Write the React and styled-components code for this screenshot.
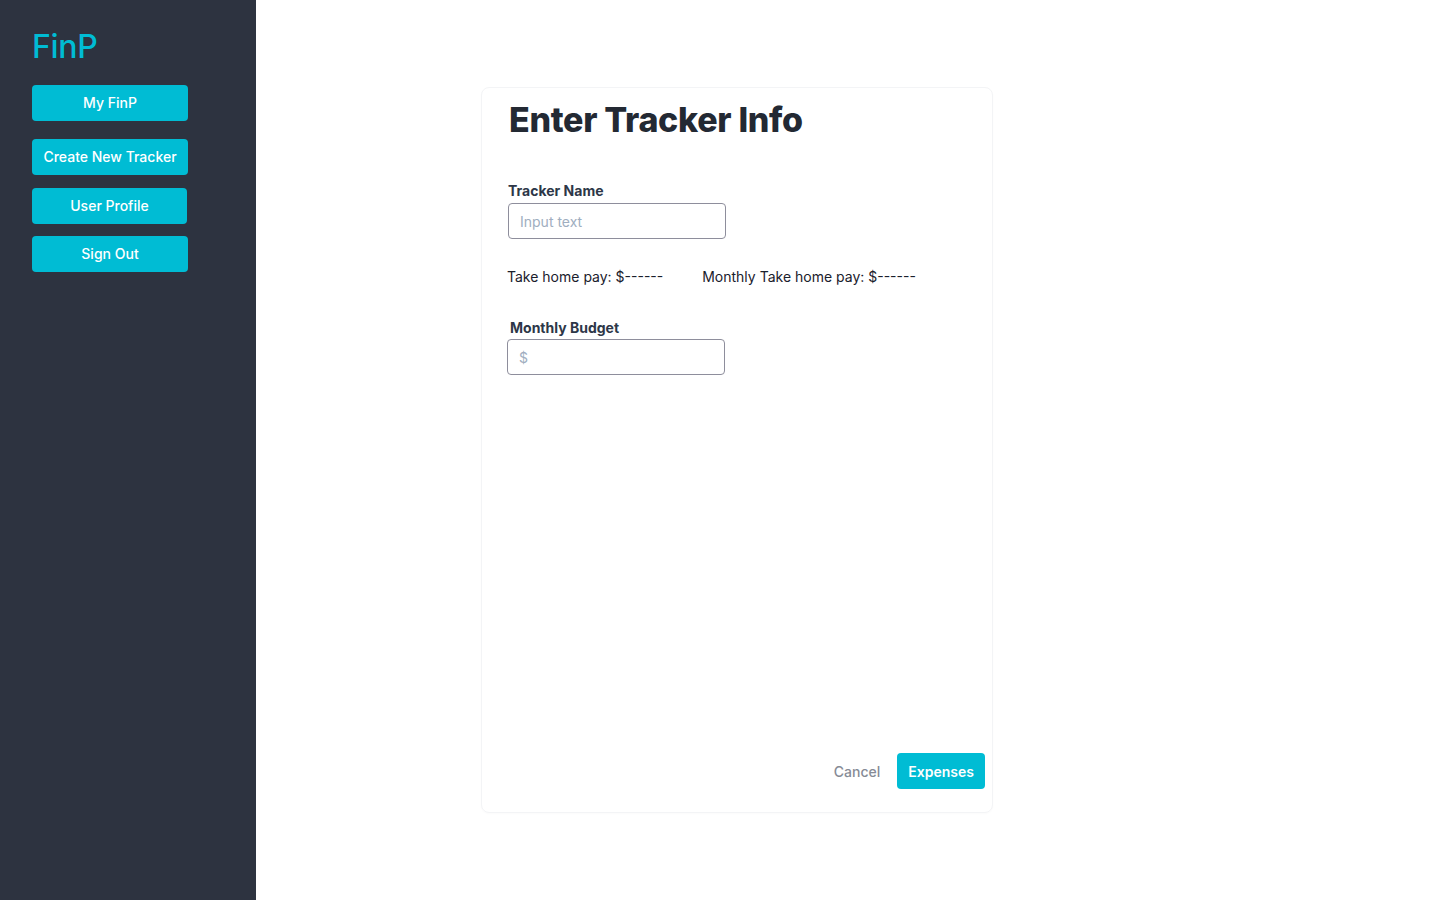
import styled, { createGlobalStyle } from 'styled-components';

const GlobalStyle = createGlobalStyle`
  html, body { margin: 0; padding: 0; }
  body {
    font-family: Inter, "Noto Sans", sans-serif;
    background: #ffffff;
    color: #1a202c;
  }
`;

const Page = styled.div`
  display: flex;
  min-height: 900px;
`;

const Sidebar = styled.aside`
  width: 256px;
  flex-shrink: 0;
  background: #2d3340;
  padding: 28px 32px;
  box-sizing: border-box;
  display: flex;
  flex-direction: column;
`;

const Logo = styled.div`
  color: #00bcd4;
  font-size: 32px;
  font-weight: 500;
  line-height: 38px;
  margin-bottom: 19px;
  letter-spacing: -0.3px;
`;

const NavButton = styled.button`
  width: ${(p) => p.$width || 156}px;
  height: 36px;
  margin-bottom: ${(p) => p.$gap || 12}px;
  border: none;
  border-radius: 4px;
  background: #00bcd4;
  color: #ffffff;
  font-family: Inter, sans-serif;
  font-size: 14px;
  font-weight: 500;
  line-height: 34px;
  cursor: pointer;
`;

const Main = styled.main`
  flex: 1;
  padding: 87px 0 0 225px;
`;

const Card = styled.section`
  width: 512px;
  height: 726px;
  box-sizing: border-box;
  border: 1px solid #f3f4f6;
  border-radius: 8px;
  box-shadow: 0 1px 2px rgba(0, 0, 0, 0.02);
  padding: 11px 7px 23px 26px;
  display: flex;
  flex-direction: column;
`;

const Title = styled.h1`
  margin: 0 0 40px 1px;
  font-size: 34px;
  line-height: 42px;
  font-weight: 800;
  color: #232933;
  letter-spacing: -0.3px;
`;

const Field = styled.div`
  display: flex;
  flex-direction: column;
  margin-left: ${(p) => p.$indent || 0}px;
`;

const Label = styled.label`
  font-size: 14px;
  font-weight: 700;
  color: #2d3748;
  line-height: 20px;
  margin: 0 0 ${(p) => p.$mb ?? 2}px ${(p) => p.$shift || 0}px;
`;

const TextInput = styled.input`
  width: 218px;
  height: 36px;
  box-sizing: border-box;
  border: 1px solid #8e8e9c;
  border-radius: 4px;
  padding: 0 11px;
  font-family: Inter, sans-serif;
  font-size: 14px;
  color: #1a202c;
  outline: none;

  &::placeholder {
    color: #a0aec0;
  }
`;

const PayRow = styled.div`
  display: flex;
  gap: 39px;
  font-size: 14px;
  color: #1a202c;
  line-height: 20px;
  margin: 28px 0 31px -1px;
`;

const Spacer = styled.div`
  flex: 1;
`;

const Footer = styled.div`
  display: flex;
  justify-content: flex-end;
  align-items: center;
  gap: 17px;
`;

const GhostButton = styled.button`
  border: none;
  background: none;
  font-family: Inter, sans-serif;
  font-size: 14px;
  font-weight: 500;
  color: #868b96;
  padding: 0;
  cursor: pointer;
`;

const PrimaryButton = styled.button`
  height: 36px;
  padding: 0 11px;
  border: none;
  border-radius: 4px;
  background: #00bcd4;
  color: #ffffff;
  font-family: Inter, sans-serif;
  font-size: 14px;
  font-weight: 600;
  cursor: pointer;
`;

export default function App() {
  return (
    <>
      <GlobalStyle />
      <Page>
        <Sidebar>
          <Logo>FinP</Logo>
          <NavButton $gap={18}>My FinP</NavButton>
          <NavButton $gap={13}>Create New Tracker</NavButton>
          <NavButton $width={155} $gap={12}>User Profile</NavButton>
          <NavButton>Sign Out</NavButton>
        </Sidebar>
        <Main>
          <Card>
            <Title>Enter Tracker Info</Title>
            <Field>
              <Label>Tracker Name</Label>
              <TextInput placeholder="Input text" />
            </Field>
            <PayRow>
              <span>Take home pay: $------</span>
              <span>Monthly Take home pay: $------</span>
            </PayRow>
            <Field $indent={-1}>
              <Label $shift={3} $mb={1}>Monthly Budget</Label>
              <TextInput placeholder="$" />
            </Field>
            <Spacer />
            <Footer>
              <GhostButton>Cancel</GhostButton>
              <PrimaryButton>Expenses</PrimaryButton>
            </Footer>
          </Card>
        </Main>
      </Page>
    </>
  );
}
